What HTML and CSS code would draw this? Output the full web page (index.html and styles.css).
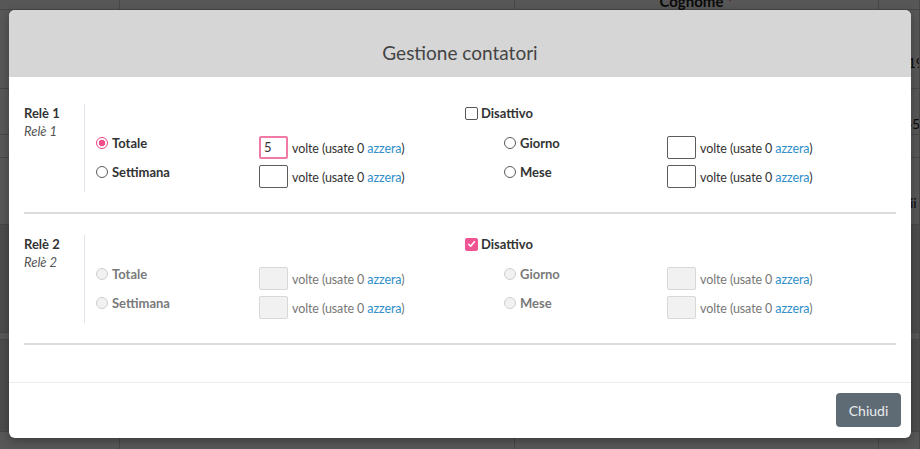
FILE: index.html
```html
<!DOCTYPE html>
<html lang="it">
<head>
<meta charset="utf-8">
<title>Gestione contatori</title>
<link rel="stylesheet" href="styles.css">
</head>
<body>
<div class="page">
  <div class="trow thead"><div class="c c1"></div><div class="c c2"></div><div class="c c3">Cognome <span class="req">*</span></div><div class="c c4"></div></div>
  <div class="trow r1"><div class="c c1"></div><div class="c c2"></div><div class="c c3"></div><div class="c c4"><span class="peek">(19)</span></div></div>
  <div class="trow r2"><div class="c c1"></div><div class="c c2"></div><div class="c c3"></div><div class="c c4"><span class="peek">456</span></div></div>
  <div class="trow r3"><div class="c c1"></div><div class="c c2"></div><div class="c c3"></div><div class="c c4"></div></div>
  <div class="trow r4"><div class="c c1"></div><div class="c c2"></div><div class="c c3"></div><div class="c c4"><span class="peek">ii i</span></div></div>
  <div class="trow r5 grey"><div class="c c1"></div><div class="c c2"></div><div class="c c3"></div><div class="c c4"></div></div>
  <div class="trow r6"><div class="c c1"></div><div class="c c2"></div><div class="c c3"></div><div class="c c4"></div></div>
  <div class="trow r7 grey"><div class="c c1"></div><div class="c c2"></div><div class="c c3"></div><div class="c c4"></div></div>
  <div class="trow r8"><div class="c c1"></div><div class="c c2"></div><div class="c c3"></div><div class="c c4"></div></div>
</div>

<div class="overlay">
  <div class="modal">
    <div class="modal-header">
      <h4 class="modal-title">Gestione contatori</h4>
    </div>
    <div class="modal-body">
      <div class="rele">
        <div class="rele-label">
          <div class="rele-name">Relè 1</div>
          <div class="rele-desc">Relè 1</div>
        </div>
        <div class="rele-content">
          <label class="disattivo"><span class="checkbox"></span><span>Disattivo</span></label>
          <div class="counters">
            <label class="opt"><span class="radio checked"></span><span>Totale</span></label>
            <div class="field"><span class="num focus">5</span><span class="txt">volte (usate 0 <a class="reset">azzera</a>)</span></div>
            <label class="opt"><span class="radio"></span><span>Giorno</span></label>
            <div class="field"><span class="num"></span><span class="txt">volte (usate 0 <a class="reset">azzera</a>)</span></div>
            <label class="opt"><span class="radio"></span><span>Settimana</span></label>
            <div class="field"><span class="num"></span><span class="txt">volte (usate 0 <a class="reset">azzera</a>)</span></div>
            <label class="opt"><span class="radio"></span><span>Mese</span></label>
            <div class="field"><span class="num"></span><span class="txt">volte (usate 0 <a class="reset">azzera</a>)</span></div>
          </div>
        </div>
      </div>
      <hr class="sep">
      <div class="rele disabled">
        <div class="rele-label">
          <div class="rele-name">Relè 2</div>
          <div class="rele-desc">Relè 2</div>
        </div>
        <div class="rele-content">
          <label class="disattivo"><span class="checkbox checked"><svg viewBox="0 0 12 12" width="12" height="12"><path d="M3 6.3 L5.1 8.4 L9.2 3.6" fill="none" stroke="#fff" stroke-width="1.7" stroke-linecap="round" stroke-linejoin="round"/></svg></span><span>Disattivo</span></label>
          <div class="counters">
            <label class="opt"><span class="radio"></span><span>Totale</span></label>
            <div class="field"><span class="num"></span><span class="txt">volte (usate 0 <a class="reset">azzera</a>)</span></div>
            <label class="opt"><span class="radio"></span><span>Giorno</span></label>
            <div class="field"><span class="num"></span><span class="txt">volte (usate 0 <a class="reset">azzera</a>)</span></div>
            <label class="opt"><span class="radio"></span><span>Settimana</span></label>
            <div class="field"><span class="num"></span><span class="txt">volte (usate 0 <a class="reset">azzera</a>)</span></div>
            <label class="opt"><span class="radio"></span><span>Mese</span></label>
            <div class="field"><span class="num"></span><span class="txt">volte (usate 0 <a class="reset">azzera</a>)</span></div>
          </div>
        </div>
      </div>
      <hr class="sep">
    </div>
    <div class="modal-footer">
      <button class="btn">Chiudi</button>
    </div>
  </div>
</div>
</body>
</html>
```

FILE: styles.css
```css
* { box-sizing: border-box; }
html, body { margin: 0; padding: 0; }
body {
  width: 920px;
  height: 449px;
  overflow: hidden;
  position: relative;
  font-family: "Lato", "Liberation Sans", sans-serif;
  font-size: 13px;
  color: #333;
  background: #fff;
}

/* ---------- page behind the modal ---------- */
.page { display: flex; flex-direction: column; margin-top: -20px; height: 469px; overflow: hidden; }
.trow { display: grid; grid-template-columns: 120px 395px 364px 41px; border-bottom: 1px solid #cfcfcf; background: #fff; flex: none; }
.trow .c { border-right: 1px solid #cfcfcf; }
.thead { height: 30px; }
.thead .c3 { text-align: center; font-weight: 700; font-size: 15px; line-height: 18px; padding-top: 12px; color: #222; }
.req { color: #d33; }
.r1 { height: 79px; }
.r2 { height: 46px; }
.r3 { height: 23px; }
.r4 { height: 67px; }
.r5 { height: 108px; }
.r6 { height: 7px; }
.r7 { height: 92px; }
.r8 { height: 40px; }
.grey { background: #dedede; }
.c4 { overflow: hidden; }
.peek { display: block; white-space: nowrap; font-size: 14px; color: #222; }
.r1 .peek { padding-top: 44px; padding-left: 25px; }
.r2 .peek { padding-top: 26px; padding-left: 25px; }
.r4 .peek { padding-top: 36px; padding-left: 31px; }

/* ---------- overlay & modal ---------- */
.overlay {
  position: absolute;
  inset: 0;
  background: rgba(0, 0, 0, 0.66);
  padding: 10px 9px 11px 9px;
}
.modal {
  background: #fff;
  border-radius: 6px;
  height: 428px;
  display: flex;
  flex-direction: column;
  box-shadow: 0 3px 9px rgba(0, 0, 0, 0.3);
}
.modal-header {
  height: 67px;
  background: #d6d6d6;
  border-radius: 6px 6px 0 0;
  padding-top: 30px;
}
.modal-title {
  margin: 0;
  text-align: center;
  font-weight: 400;
  font-size: 19px;
  line-height: 26px;
  color: #444;
}
.modal-body {
  flex: 1;
  padding: 27px 15px 0 15px;
}

.rele { display: flex; }
.rele-label {
  width: 61px;
  border-right: 1px solid #dfe4ea;
  line-height: 18px;
}
.rele-name { font-weight: 700; color: #333; }
.rele-desc { font-style: italic; color: #555; }
.rele-content {
  flex: 1;
  padding: 0 0 4px 11px;
}
.disattivo {
  display: flex;
  align-items: center;
  margin-left: 369px;
  height: 18px;
  font-weight: 700;
  color: #333;
}
.checkbox {
  width: 13px;
  height: 13px;
  border: 1px solid #555;
  border-radius: 2px;
  margin-right: 3px;
  display: inline-flex;
  align-items: center;
  justify-content: center;
  background: #fff;
}
.checkbox.checked { background: #ef5592; border-color: #ef5592; }

.counters {
  display: grid;
  grid-template-columns: 163px 245px 163px 1fr;
  row-gap: 4px;
  margin-top: 12px;
}
.opt {
  display: flex;
  align-items: center;
  height: 18px;
  font-weight: 700;
  color: #333;
}
.radio {
  width: 12px;
  height: 12px;
  border: 1px solid #5a5a5a;
  border-radius: 50%;
  margin-right: 4px;
  background: #fff;
}
.radio.checked {
  border-color: #e9447f;
  background: radial-gradient(circle, #ef4f8b 0 3px, #fff 3.6px);
}
.field {
  display: flex;
  align-items: center;
  margin-top: 2px;
  height: 23px;
  color: #333;
  white-space: nowrap;
}
.txt { font-size: 12.5px; letter-spacing: -0.1px; padding-top: 1px; }
.num {
  width: 29px;
  height: 23px;
  border: 1px solid #5c5c5c;
  border-radius: 2px;
  margin-right: 4px;
  padding-left: 4px;
  line-height: 21px;
  background: #fff;
}
.num.focus { border: 2px solid #f07aa6; padding-left: 3px; line-height: 19px; }
.reset { color: #2f8fc9; text-decoration: none; }

.disabled .opt { color: #7a7a7a; }
.disabled .field { color: #777; }
.disabled .radio { border-color: #cfcfcf; background: #f1f1f1; }
.disabled .num { border-color: #d8d8d8; background: #f1f1f1; }

.sep {
  border: 0;
  height: 2px;
  background: #dcdcdc;
  margin: 20px 0 21px 0;
}

.modal-footer {
  border-top: 1px solid #ececec;
  padding: 10px 10px 11px 0;
  display: flex;
  justify-content: flex-end;
}
.btn {
  width: 65px;
  height: 34px;
  border: 0;
  border-radius: 4px;
  background: #5f6b74;
  color: #e9ecef;
  font-family: "Lato", "Liberation Sans", sans-serif;
  font-size: 14px;
}
```
